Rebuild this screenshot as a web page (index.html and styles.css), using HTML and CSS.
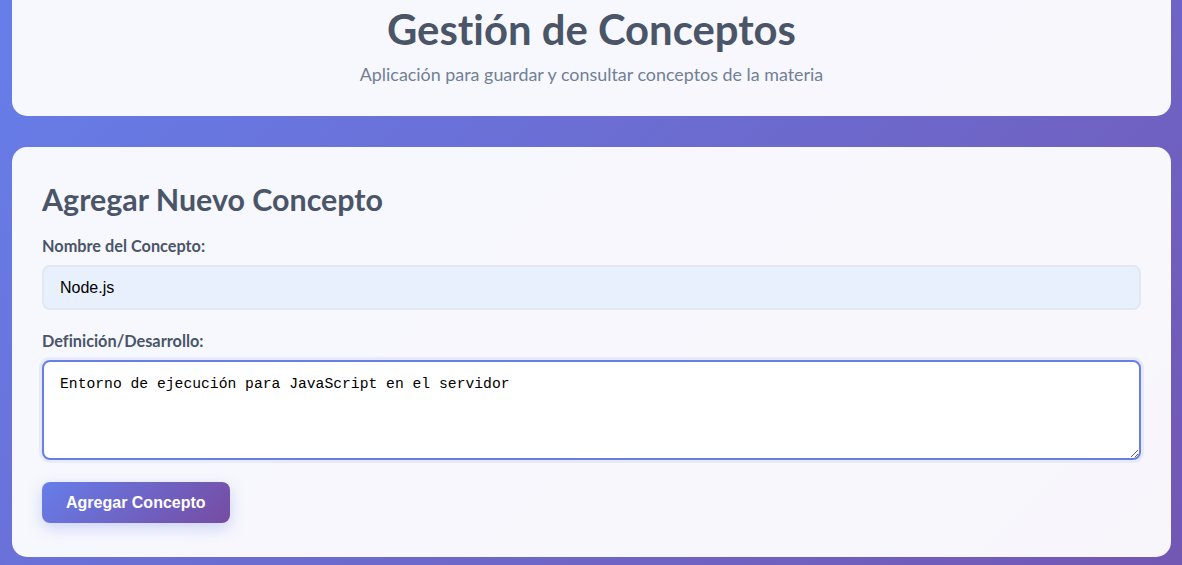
FILE: index.html
```html
<!DOCTYPE html>
<html lang="es">
<head>
<meta charset="utf-8">
<title>Gestión de Conceptos</title>
<link rel="stylesheet" href="styles.css">
</head>
<body>
<div class="container">
  <header class="card header">
    <h1>Gestión de Conceptos</h1>
    <p>Aplicación para guardar y consultar conceptos de la materia</p>
  </header>
  <section class="card form-card">
    <h2>Agregar Nuevo Concepto</h2>
    <form class="form">
      <div class="form-group">
        <label for="nombre">Nombre del Concepto:</label>
        <input id="nombre" class="input autofilled" type="text" value="Node.js">
      </div>
      <div class="form-group">
        <label for="def">Definición/Desarrollo:</label>
        <textarea id="def" class="textarea focused">Entorno de ejecución para JavaScript en el servidor</textarea>
      </div>
      <button type="button" class="btn">Agregar Concepto</button>
    </form>
  </section>
</div>
</body>
</html>
```
FILE: styles.css
```css
* { box-sizing: border-box; }
html, body { margin: 0; padding: 0; }
body {
  font-family: Lato, "Noto Sans", sans-serif;
  font-variant-ligatures: none;
  background: #6d60bb linear-gradient(135deg, #667eea 0%, #764ba2 100%) no-repeat;
  background-size: 100% 1100px;
  height: 100vh;
  overflow: hidden;
}
.container {
  width: 1159px;
  margin: -24px 0 0 12px;
}
.card {
  background: rgba(255, 255, 255, 0.95);
  border-radius: 15px;
  padding: 30px;
}
.header {
  text-align: center;
  margin-bottom: 31px;
}
.header h1 {
  margin: 0 0 10px;
  font-size: 41.8px;
  font-weight: 700;
  color: #4a5568;
  line-height: 47px;
}
.header p {
  margin: 0;
  font-size: 17.9px;
  color: #718096;
  line-height: 23px;
}
.form-card {
  padding-bottom: 34px;
}
.form-card h2 {
  margin: 0 0 17px;
  padding-top: 3px;
  font-size: 30.4px;
  line-height: 38px;
  color: #4a5568;
  font-weight: 700;
}
.form-group {
  margin-bottom: 20px;
}
.form-group label {
  display: block;
  margin-bottom: 8px;
  font-size: 16.3px;
  line-height: 22px;
  font-weight: 700;
  color: #4a5568;
}
.input, .textarea {
  width: 100%;
  display: block;
  border: 2px solid #e2e8f0;
  border-radius: 8px;
  padding: 12px 16px;
  font-size: 16px;
  outline: none;
}
.input {
  height: 45px;
  font-family: "Liberation Sans", Arial, sans-serif;
  color: #000;
}
.autofilled {
  background: #e8f0fe;
  border-color: #e2e8f0;
}
.textarea {
  height: 100px;
  padding-top: 12px;
  font-family: "Liberation Mono", monospace;
  font-size: 14.7px;
  line-height: 20px;
  color: #000;
  background: #fff;
  resize: vertical;
}
.focused {
  border-color: #667eea;
  box-shadow: 0 0 0 3px rgba(102, 126, 234, 0.1);
}
.form-group:last-of-type { margin-bottom: 22px; }
.btn {
  display: inline-block;
  height: 41px;
  padding: 0 24px;
  border: none;
  border-radius: 8px;
  background: linear-gradient(135deg, #667eea 0%, #764ba2 100%);
  color: #fff;
  font-family: "Liberation Sans", Arial, sans-serif;
  font-weight: 700;
  font-size: 16px;
  box-shadow: 0 5px 15px rgba(102, 126, 234, 0.3);
  cursor: pointer;
}
```
